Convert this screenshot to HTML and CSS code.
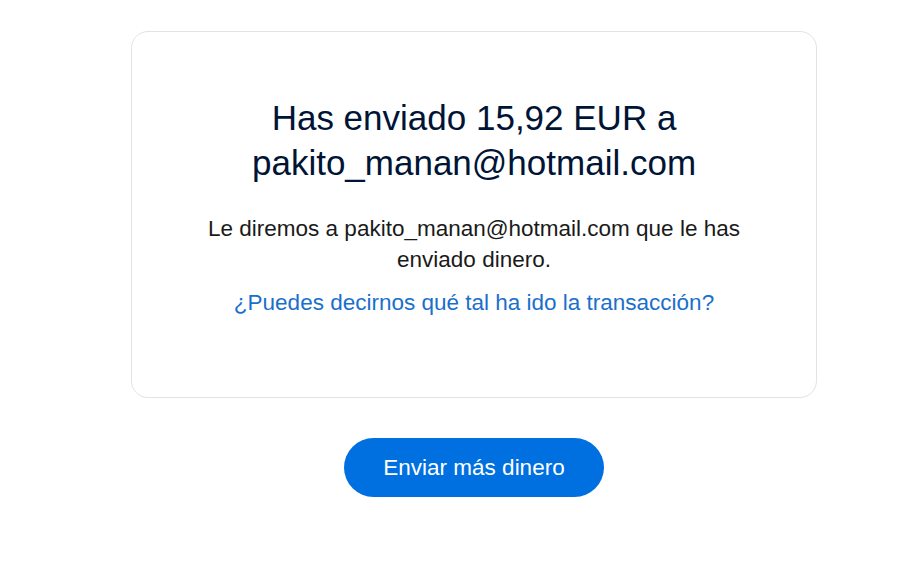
FILE: index.html
```html
<!DOCTYPE html>
<html lang="es">

<head>
    <meta charset="UTF-8">
    <meta name="viewport" content="width=device-width, initial-scale=1.0">
    <title>Pago enviado</title>
    <link rel="stylesheet" href="styles.css">
</head>

<body>
    <div class="page">
        <div class="card">
            <h1 class="title">Has enviado 15,92 EUR a pakito_manan@hotmail.com</h1>
            <p class="note">Le diremos a pakito_manan@hotmail.com que le has enviado dinero.</p>
            <a class="feedback" href="#">¿Puedes decirnos qué tal ha ido la transacción?</a>
        </div>
        <div class="actions">
            <button class="send-more">Enviar más dinero</button>
        </div>
    </div>
</body>

</html>
```

FILE: styles.css
```css
body {
    font-family: "Liberation Sans", Arial, sans-serif;
    margin: 0;
    background: #ffffff;
    color: #001435;
}

.page {
    width: 686px;
    margin: 31px 0 0 131px;
}

.card {
    display: flex;
    flex-direction: column;
    align-items: center;
    border: 1px solid #e3e3e3;
    border-radius: 17px;
    padding: 63px 40px 79px;
    text-align: center;
}

.title {
    max-width: 580px;
    margin: 0;
    font-size: 35px;
    font-weight: normal;
    line-height: 45px;
    color: #001435;
}

.note {
    max-width: 580px;
    margin: 28px 0 0;
    font-size: 22.5px;
    line-height: 31px;
    color: #1a1a1a;
}

.feedback {
    margin-top: 12px;
    font-size: 22.5px;
    line-height: 31px;
    color: #1a6fcc;
    text-decoration: none;
}

.actions {
    display: flex;
    justify-content: center;
    margin-top: 40px;
}

.send-more {
    height: 59px;
    padding: 0 39px;
    border: none;
    border-radius: 30px;
    background: #0070e0;
    color: #ffffff;
    font-family: inherit;
    font-size: 22.5px;
    cursor: pointer;
}
```
